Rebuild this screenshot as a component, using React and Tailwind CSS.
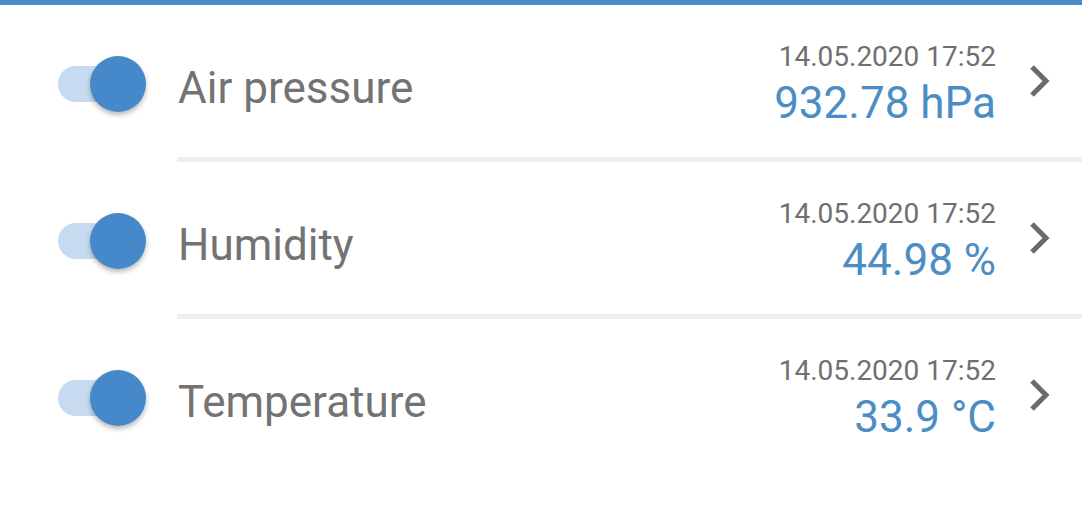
import React from 'react';

const sensors = [
  { name: 'Air pressure', time: '14.05.2020 17:52', value: '932.78 hPa' },
  { name: 'Humidity', time: '14.05.2020 17:52', value: '44.98 %' },
  { name: 'Temperature', time: '14.05.2020 17:52', value: '33.9 °C' },
];

function Toggle() {
  return (
    <div className="relative w-[88px] h-[56px] flex items-center shrink-0">
      <div className="w-[80px] h-[36px] rounded-full bg-[#c6dbef]" />
      <div className="absolute right-0 top-0 w-[56px] h-[56px] rounded-full bg-[#4689ca] shadow-[0_3px_5px_rgba(0,0,0,0.28)]" />
    </div>
  );
}

function Chevron() {
  return (
    <svg width="24" height="36" viewBox="0 0 24 36" className="shrink-0 mb-[6px]">
      <path d="M4 4 L18 18 L4 32" fill="none" stroke="#6b6b6b" strokeWidth="5" />
    </svg>
  );
}

export default function App() {
  return (
    <div className="w-[1082px] h-[528px] bg-white overflow-hidden" style={{ fontFamily: 'Roboto, "Noto Sans", sans-serif' }}>
      <div className="h-[5px] bg-[#4a8cc8]" />
      {sensors.map((s, i) => (
        <div key={s.name} className="flex flex-col">
          <div className="h-[152px] flex items-center pl-[58px] pr-[30px] pt-[6px]">
            <Toggle />
            <div className="ml-[32px] flex-1 text-[44px] text-[#737373] leading-none pt-[7px]">{s.name}</div>
            <div className="flex flex-col items-end mr-[32px]">
              <div className="text-[28px] leading-none text-[#707070]">{s.time}</div>
              <div className="text-[44px] leading-none text-[#4b8dc5] mt-[10px]">{s.value}</div>
            </div>
            <Chevron />
          </div>
          {i < sensors.length - 1 && <div className="ml-[177px] h-[5px] bg-[#eeeef3]" />}
        </div>
      ))}
    </div>
  );
}
